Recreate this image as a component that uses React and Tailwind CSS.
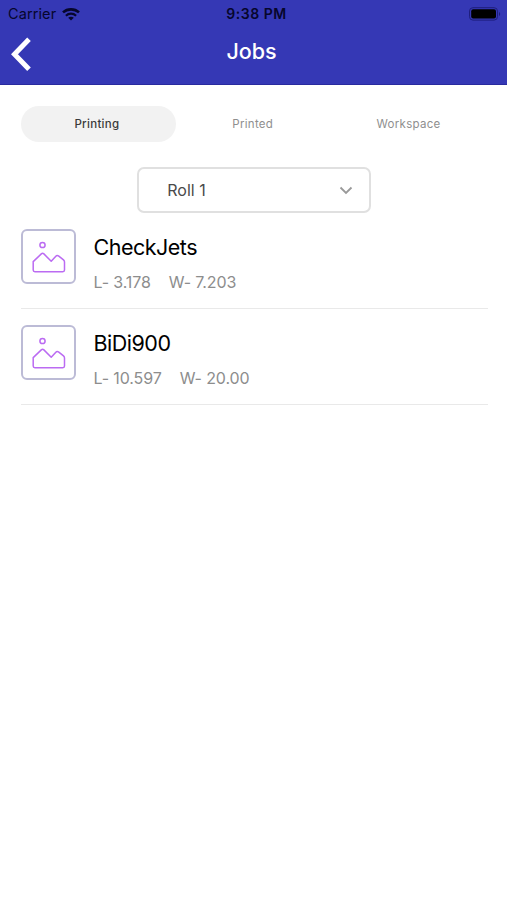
import { useState } from "react";

const tabs = ["Printing", "Printed", "Workspace"];

const jobs = [
  { name: "CheckJets", length: "3.178", width: "7.203" },
  { name: "BiDi900", length: "10.597", width: "20.00" },
];

function StatusBar() {
  return (
    <div className="grid h-7 grid-cols-3 items-center pr-[6px] pl-2 text-[#06062c]">
      <div className="flex items-center gap-[6px]">
        <span className="text-[14.5px] leading-7 tracking-[0.1px]">Carrier</span>
        <svg width="18" height="13" viewBox="0 0 18 13" fill="none" stroke="currentColor">
          <path d="M1 4.4C5.4 0.4 12.6 0.4 17 4.4" strokeWidth="2.6" />
          <path d="M3.9 7.7C6.8 5 11.2 5 14.1 7.7" strokeWidth="2.2" />
          <path d="M9 12.4L6.2 9.7C7.8 8.3 10.2 8.3 11.8 9.7Z" fill="currentColor" stroke="none" />
        </svg>
      </div>
      <span className="pl-1 text-center text-[14px] leading-7 font-semibold tracking-[0.5px] whitespace-nowrap">
        9:38 PM
      </span>
      <div className="flex justify-end">
        <svg width="33" height="14" viewBox="0 0 33 14" fill="none">
          <rect x="1.5" y="0.7" width="28" height="12.4" rx="3.4" stroke="#1e1e7c" />
          <rect x="3.2" y="2.3" width="24.8" height="9.2" rx="2" fill="#000" />
          <path d="M31 5V9C32.6 8.4 32.6 5.6 31 5Z" fill="#1e1e7c" />
        </svg>
      </div>
    </div>
  );
}

function Header() {
  return (
    <header className="h-[85px] border-b border-[#292a9e] bg-[#3538b5]">
      <StatusBar />
      <div className="grid h-[52px] grid-cols-[60px_1fr_60px] items-center pr-1">
        <button className="pl-[10px]">
          <svg width="22" height="34" viewBox="0 0 22 34" fill="none" stroke="#fff" strokeWidth="5">
            <path d="M19 2.2L4.5 17.2L19 32.2" />
          </svg>
        </button>
        <h1 className="-mt-[5px] text-center text-[21.5px] font-medium tracking-[-0.1px] text-white">Jobs</h1>
      </div>
    </header>
  );
}

function Thumbnail() {
  return (
    <div className="flex size-[55px] shrink-0 items-center justify-center rounded-[6px] border-2 border-[#bcbbd6]">
      <svg width="53" height="53" viewBox="0 0 53 53" fill="none" stroke="#bb6bf2" strokeWidth="1.5" strokeLinejoin="round" className="shrink-0">
        <circle cx="20.5" cy="15" r="2.6" />
        <path d="M11.2 31.6L19.3 23.9Q20.6 22.7 21.9 23.9L29.2 31.3L33.6 26.4Q35 24.8 36.8 26.1L41.5 29.9Q42.5 30.8 42.5 32V40Q42.5 41.7 40.8 41.7H12.9Q11.2 41.7 11.2 40Z" />
      </svg>
    </div>
  );
}

function JobRow({ job }) {
  return (
    <li className="flex h-24 gap-[18px] border-b border-[#e9e9e9] pt-4">
      <Thumbnail />
      <div>
        <div className="mt-1 text-[21.5px] leading-7 tracking-[-0.5px] text-black">{job.name}</div>
        <div className="mt-[9px] flex gap-[18px] text-[16px] leading-6 tracking-[-0.1px] text-[#8d8d8d]">
          <span>L- {job.length}</span>
          <span>W- {job.width}</span>
        </div>
      </div>
    </li>
  );
}

export default function App() {
  const [activeTab, setActiveTab] = useState("Printing");

  return (
    <div className="h-[900px] w-full overflow-hidden bg-white font-['Inter',sans-serif]">
      <Header />
      <main className="pt-[21px] pr-[19px] pl-[20.5px]">
        <div className="grid grid-cols-3">
          {tabs.map((tab) => (
            <button
              key={tab}
              onClick={() => setActiveTab(tab)}
              className={
                tab === activeTab
                  ? "h-9 rounded-full bg-[#f2f2f2] pt-px pr-[3px] text-[11.5px] font-medium tracking-[0.3px] text-[#3a3a3a]"
                  : "h-9 rounded-full pt-px pr-[3px] text-[11.5px] tracking-[0.3px] text-[#8f8f8f]"
              }
            >
              {tab}
            </button>
          ))}
        </div>
        <button className="mx-auto mt-[25px] flex h-[46px] w-[234px] items-center justify-between rounded-[7px] border-2 border-[#e0e0e0] pr-4 pl-7 text-[16px] text-[#4a4a4a]">
          <span>Roll 1</span>
          <svg width="14" height="9" viewBox="0 0 14 9" fill="none" stroke="#999" strokeWidth="1.8">
            <path d="M1.5 1.5L7 7L12.5 1.5" />
          </svg>
        </button>
        <ul>
          {jobs.map((job) => (
            <JobRow key={job.name} job={job} />
          ))}
        </ul>
      </main>
    </div>
  );
}
